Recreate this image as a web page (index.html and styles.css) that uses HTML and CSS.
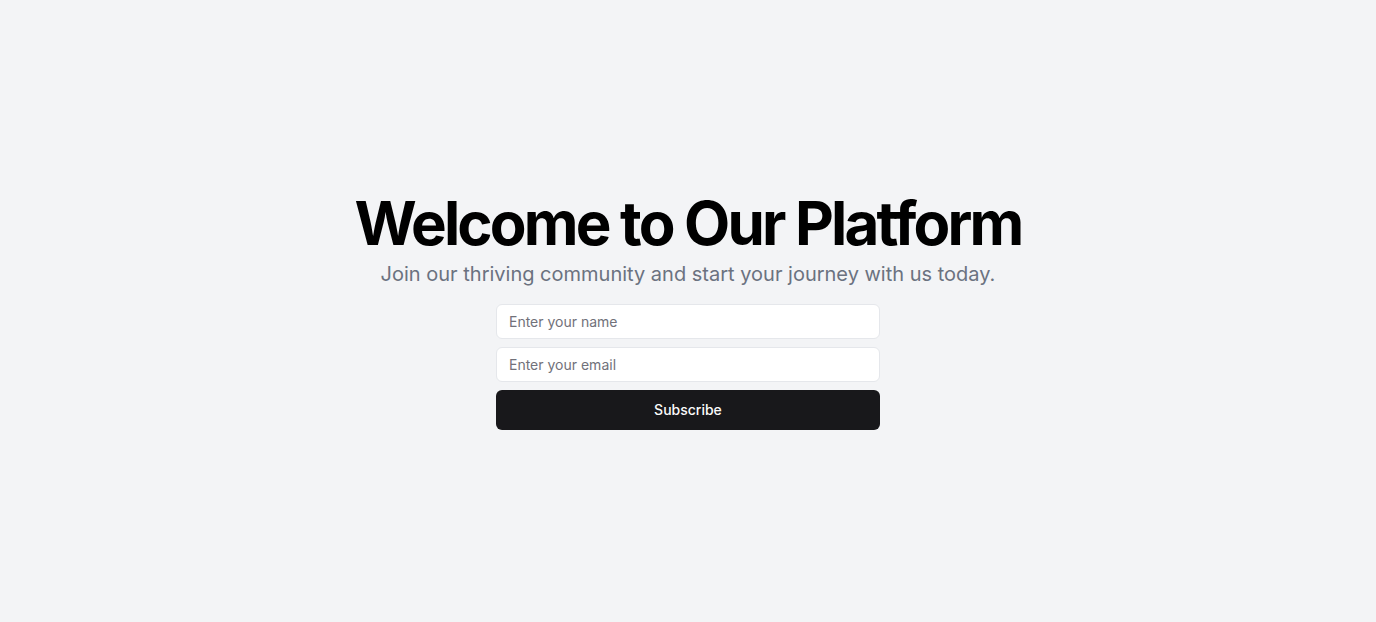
FILE: index.html
```html
<!DOCTYPE html>
<html lang="en">
<head>
<meta charset="utf-8">
<title>Welcome</title>
<link rel="stylesheet" href="styles.css">
</head>
<body>
<main class="page">
  <section class="hero">
    <div class="intro">
      <h1 class="title">Welcome to Our Platform</h1>
      <p class="subtitle">Join our thriving community and start your journey with us today.</p>
    </div>
    <form class="form">
      <input class="field" type="text" placeholder="Enter your name">
      <input class="field" type="email" placeholder="Enter your email">
      <button class="submit" type="button">Subscribe</button>
    </form>
  </section>
</main>
</body>
</html>
```

FILE: styles.css
```css
* { box-sizing: border-box; }
html, body { margin: 0; padding: 0; }
body {
  font-family: Inter, "Noto Sans", sans-serif;
  background: #f3f4f6;
  color: #09090b;
}
.page {
  min-height: 622px;
  display: flex;
  align-items: center;
  justify-content: center;
}
.hero {
  display: flex;
  flex-direction: column;
  align-items: center;
  gap: 16px;
  text-align: center;
}
.intro {
  display: flex;
  flex-direction: column;
  align-items: center;
  gap: 7px;
}
.title {
  margin: 0;
  font-size: 60px;
  line-height: 1;
  font-weight: 700;
  letter-spacing: -0.047em;
  color: #000;
}
.subtitle {
  margin: 0;
  font-size: 20px;
  line-height: 28px;
  color: #6b7280;
}
.form {
  width: 384px;
  display: flex;
  flex-direction: column;
  gap: 8px;
}
.field {
  height: 35px;
  width: 100%;
  border: 1px solid #e5e7eb;
  border-radius: 6px;
  background: #fff;
  padding: 0 12px;
  font-family: inherit;
  font-size: 14px;
  color: #09090b;
  outline: none;
}
.field::placeholder { color: #71717a; }
.submit {
  height: 40px;
  width: 100%;
  border: 0;
  border-radius: 6px;
  background: #18181b;
  color: #fafafa;
  font-family: inherit;
  font-size: 14px;
  font-weight: 500;
  cursor: pointer;
}
```
